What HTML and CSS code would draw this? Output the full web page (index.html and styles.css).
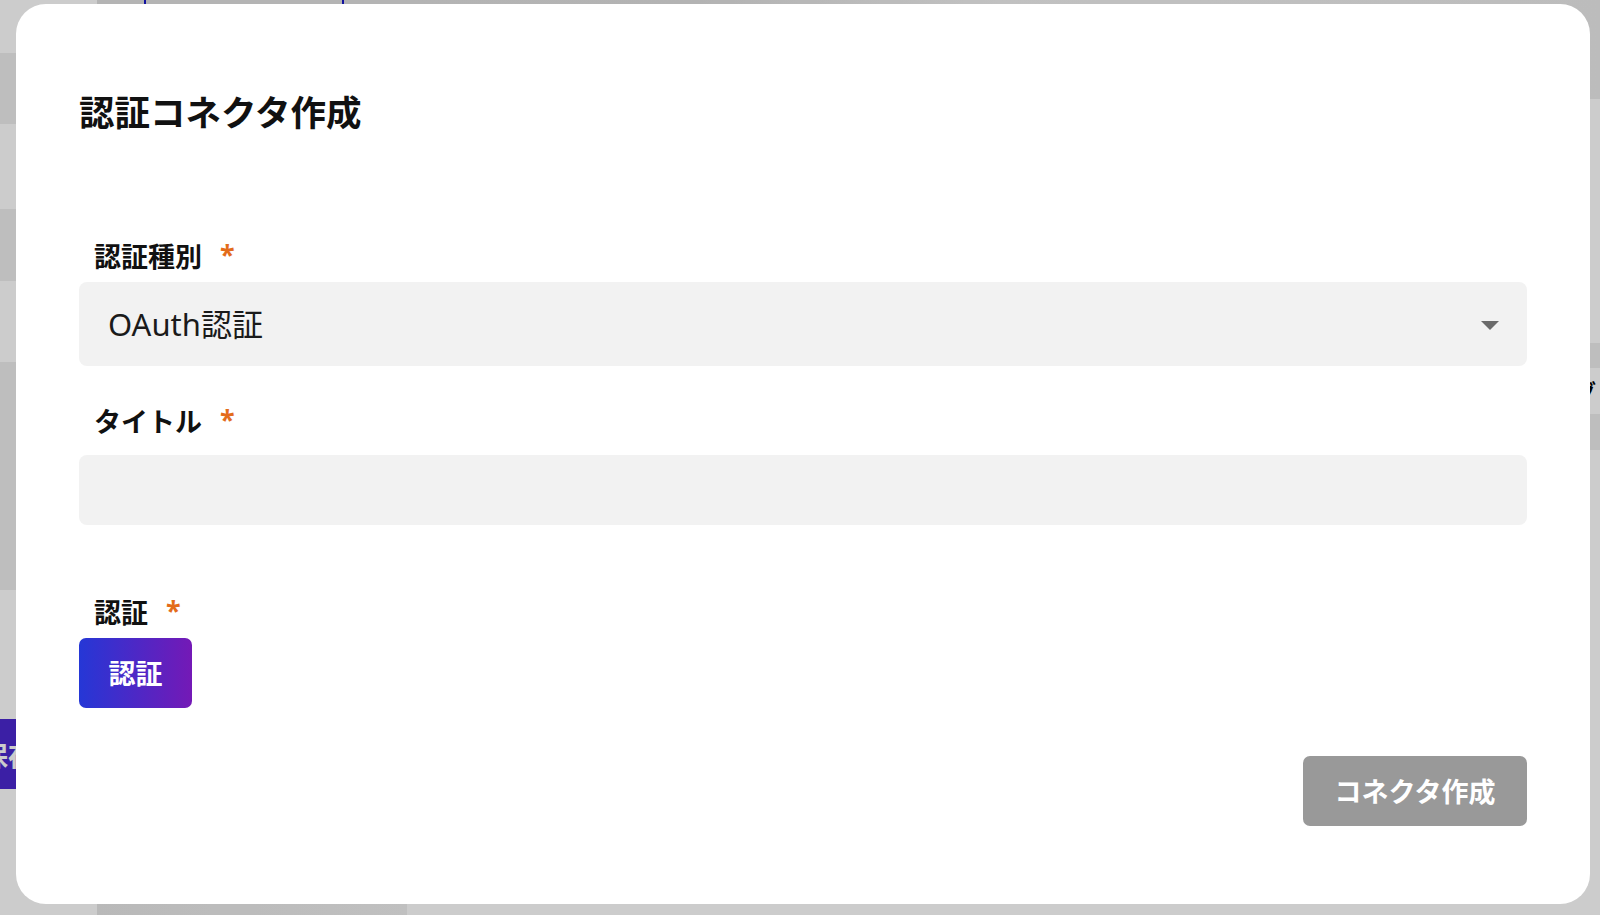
FILE: index.html
```
<!DOCTYPE html>
<html lang="ja">
<head>
<meta charset="utf-8">
<title>認証コネクタ作成</title>
<link rel="stylesheet" href="styles.css">
</head>
<body>
<div class="page">
  <aside class="sidebar">
    <div class="band band-light h53"></div>
    <div class="band band-dark h71"></div>
    <div class="band band-light h85"></div>
    <div class="band band-dark h72"></div>
    <div class="band band-light h81"></div>
    <div class="band band-dark h228"></div>
    <div class="band band-light h129"></div>
    <div class="side-action"><span class="side-btn">保存</span></div>
    <div class="band band-light grow"></div>
  </aside>
  <main class="main">
    <div class="topbar"><div class="search"></div></div>
    <div class="content">
      <div class="content-body">
        <div class="spacer"></div>
        <div class="footer-block"></div>
      </div>
      <div class="right-panel">
        <div class="band band-light h238"></div>
        <div class="band band-dark h25"></div>
        <div class="rp-text">グ</div>
        <div class="band band-dark h36"></div>
        <div class="band band-light grow"></div>
      </div>
    </div>
  </main>
</div>

<div class="overlay">
  <div class="modal">
    <h1 class="modal-title">認証コネクタ作成</h1>

    <div class="field field-type">
      <label class="field-label">認証種別<span class="req">*</span></label>
      <div class="select">
        <span class="select-value">OAuth認証</span>
        <span class="caret"></span>
      </div>
    </div>

    <div class="field field-title">
      <label class="field-label">タイトル<span class="req">*</span></label>
      <div class="text-input"></div>
    </div>

    <div class="field field-auth">
      <label class="field-label">認証<span class="req">*</span></label>
      <div><button class="btn btn-auth">認証</button></div>
    </div>

    <div class="actions">
      <button class="btn btn-submit">コネクタ作成</button>
    </div>
  </div>
</div>
</body>
</html>
```

FILE: styles.css
```
* { box-sizing: border-box; }

html, body {
  margin: 0;
  padding: 0;
  width: 1600px;
  height: 915px;
  overflow: hidden;
}

body {
  font-family: "Noto Sans", "Noto Sans CJK JP", sans-serif;
  background: #ffffff;
  color: #111;
}

/* ---------- underlying page ---------- */
.page {
  display: flex;
  width: 1600px;
  height: 915px;
}

.sidebar {
  width: 97px;
  display: flex;
  flex-direction: column;
}

.band { width: 100%; }
.band-light { background: #ffffff; }
.band-dark { background: #eeeeee; }
.grow { flex: 1; }
.h53 { height: 53px; }
.h71 { height: 71px; }
.h85 { height: 85px; }
.h72 { height: 72px; }
.h81 { height: 81px; }
.h228 { height: 228px; }
.h129 { height: 129px; }
.h238 { height: 244px; }
.h25 { height: 25px; }
.h36 { height: 36px; }

.side-action {
  height: 70px;
  display: flex;
  align-items: center;
  background: #4a27cf;
  overflow: hidden;
}

.side-btn {
  color: #fff;
  font-weight: 700;
  font-size: 27px;
  margin-left: -19px;
  white-space: nowrap;
}

.main {
  flex: 1;
  display: flex;
  flex-direction: column;
}

.topbar {
  height: 99px;
  background: linear-gradient(90deg, #e2e2e2 0%, #e0e0e0 40%, #f2f2f2 60%, #ececec 100%);
  padding-left: 47px;
}

.search {
  width: 200px;
  height: 60px;
  border-left: 2px solid #1818c8;
  border-right: 2px solid #1818c8;
}

.content {
  flex: 1;
  display: flex;
}

.content-body {
  flex: 1;
  display: flex;
  flex-direction: column;
}

.spacer { flex: 1; }

.footer-block {
  width: 310px;
  height: 12px;
  background: linear-gradient(90deg, #e8e8e8, #f0f0f0);
}

.right-panel {
  width: 14px;
  display: flex;
  flex-direction: column;
}

.rp-text {
  height: 46px;
  font-size: 22px;
  font-weight: 700;
  line-height: 46px;
  white-space: nowrap;
  margin-left: -12px;
  color: #000;
}

/* ---------- overlay + modal ---------- */
.overlay {
  position: fixed;
  inset: 0;
  background: rgba(0, 0, 0, 0.2);
  display: flex;
  padding: 4px 10px 11px 16px;
}

.modal {
  flex: 1;
  background: #ffffff;
  border-radius: 30px;
  padding: 87px 63px 0 63px;
  display: flex;
  flex-direction: column;
}

.modal-title {
  margin: 0;
  font-size: 35.5px;
  line-height: 42px;
  font-weight: 700;
  color: #111;
}

.field {
  display: flex;
  flex-direction: column;
}

.field-type { margin-top: 108px; }
.field-title { margin-top: 40px; }
.field-auth { margin-top: 72px; }

.field-label {
  font-size: 27px;
  line-height: 32px;
  font-weight: 700;
  color: #111;
  padding-left: 15px;
}

.req {
  color: #e36c1b;
  margin-left: 18px;
  font-weight: 700;
  position: relative;
  top: -2px;
}

.select {
  margin-top: 9px;
  height: 84px;
  background: #f2f2f2;
  border-radius: 8px;
  display: flex;
  align-items: center;
  justify-content: space-between;
  padding: 0 28px 0 29px;
}

.select-value {
  font-size: 31px;
  color: #1a1a1a;
  line-height: 1;
}

.caret {
  width: 0;
  height: 0;
  border-left: 9.5px solid transparent;
  border-right: 9.5px solid transparent;
  border-top: 9px solid #6b6b6b;
  margin-top: 2px;
}

.text-input {
  margin-top: 17px;
  height: 70px;
  background: #f2f2f2;
  border-radius: 8px;
}

.btn {
  font-family: "Noto Sans", "Noto Sans CJK JP", sans-serif;
  font-size: 27px;
  font-weight: 700;
  color: #ffffff;
  border: none;
  height: 70px;
  border-radius: 7px;
  cursor: pointer;
  line-height: 1;
}

.btn-auth {
  margin-top: 9px;
  width: 113px;
  padding: 0;
  background: linear-gradient(90deg, #2537d6, #7419b6);
}

.actions {
  margin-top: 48px;
  display: flex;
  justify-content: flex-end;
}

.btn-submit {
  width: 224px;
  padding: 0;
  background: #999999;
}
```
